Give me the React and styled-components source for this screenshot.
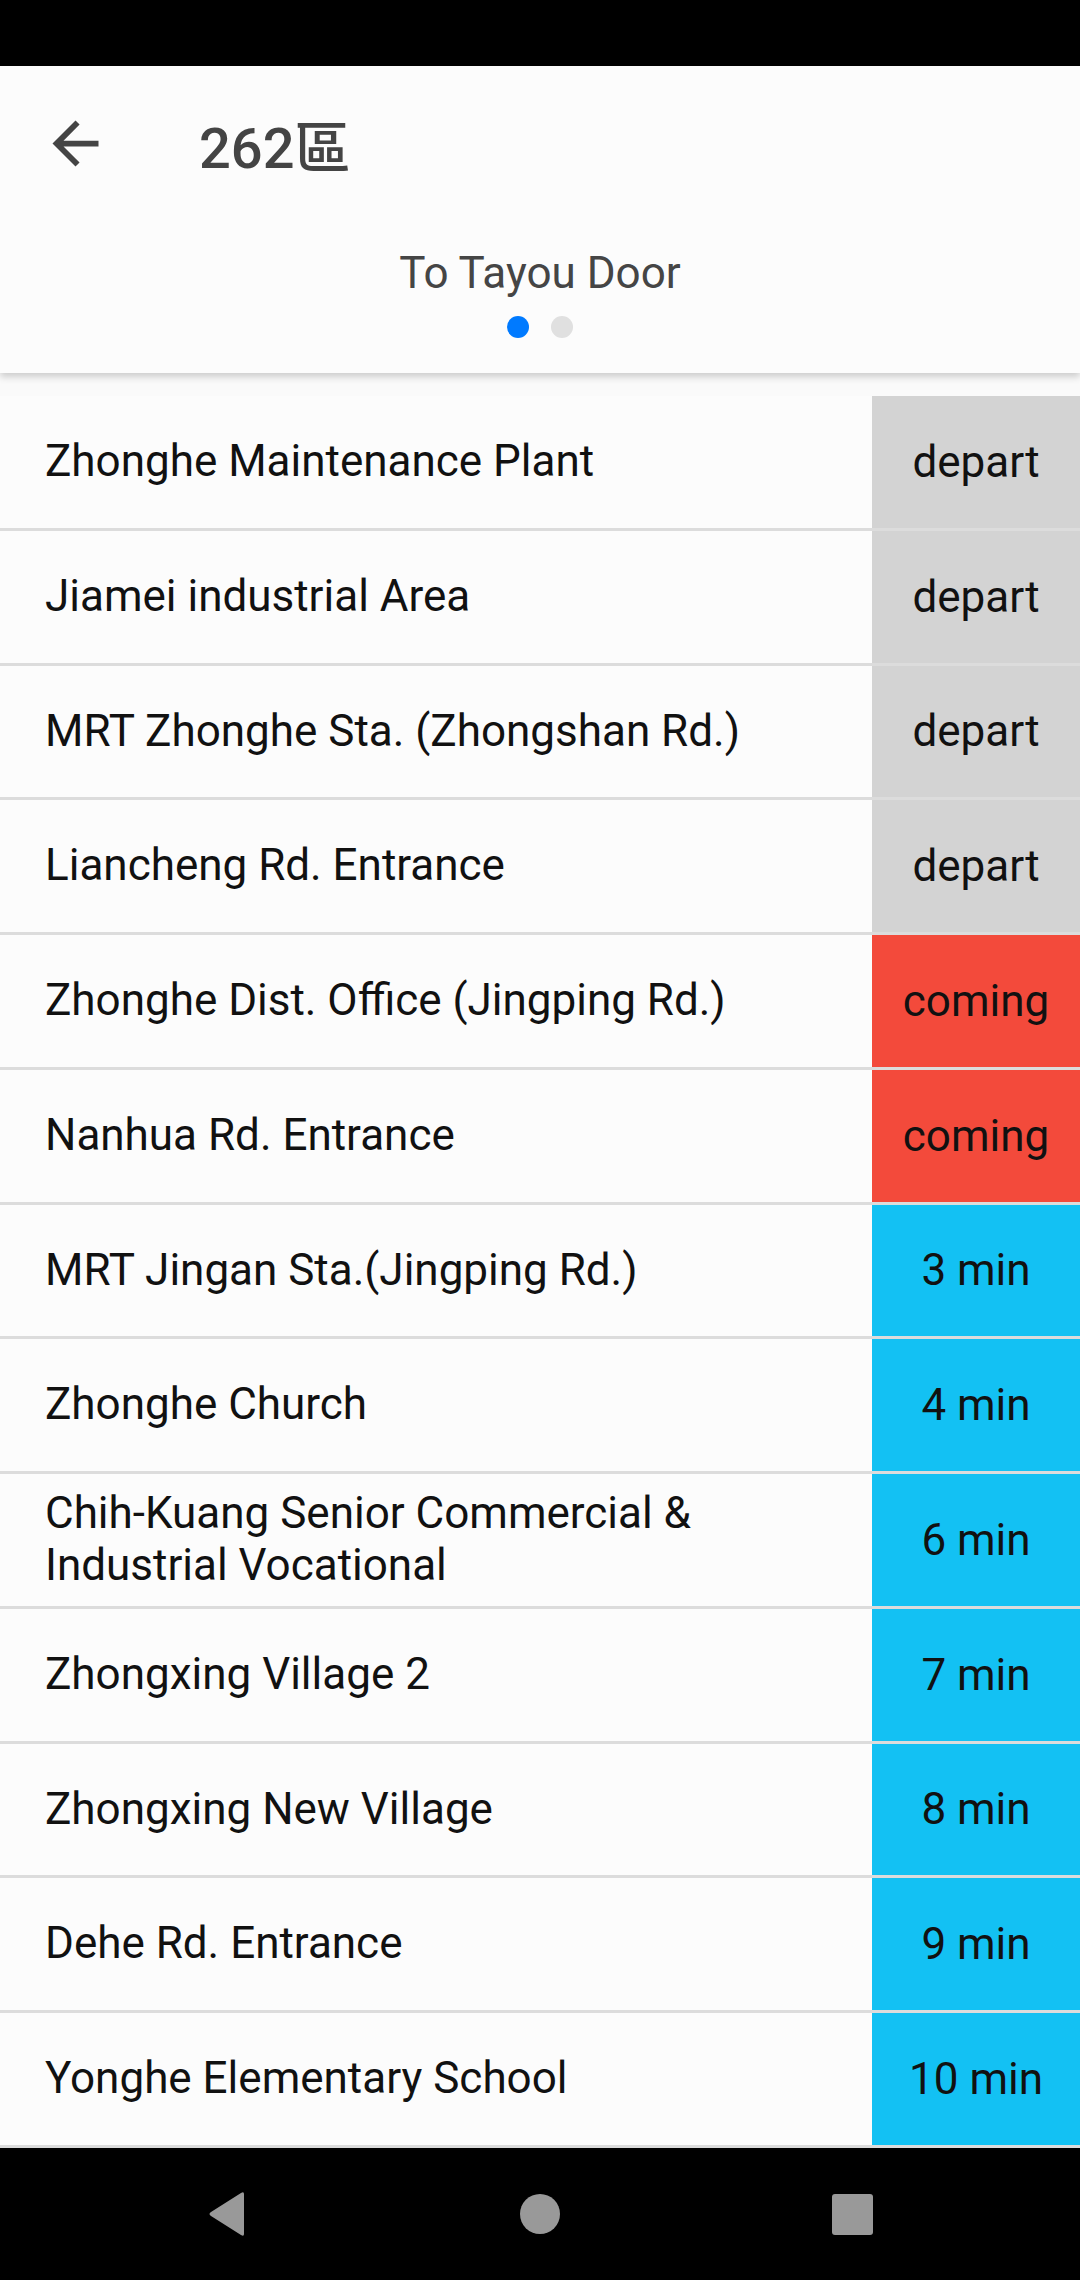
import React from "react";
import styled, { createGlobalStyle } from "styled-components";

const stops = [
  { name: "Zhonghe Maintenance Plant", status: "depart" },
  { name: "Jiamei industrial Area", status: "depart" },
  { name: "MRT Zhonghe Sta. (Zhongshan Rd.)", status: "depart" },
  { name: "Liancheng Rd. Entrance", status: "depart" },
  { name: "Zhonghe Dist. Office (Jingping Rd.)", status: "coming" },
  { name: "Nanhua Rd. Entrance", status: "coming" },
  { name: "MRT Jingan Sta.(Jingping Rd.)", status: "3 min" },
  { name: "Zhonghe Church", status: "4 min" },
  { name: "Chih-Kuang Senior Commercial & Industrial Vocational", status: "6 min" },
  { name: "Zhongxing Village 2", status: "7 min" },
  { name: "Zhongxing New Village", status: "8 min" },
  { name: "Dehe Rd. Entrance", status: "9 min" },
  { name: "Yonghe Elementary School", status: "10 min" },
];

const statusColor = (status) => {
  if (status === "depart") return "#d3d3d3";
  if (status === "coming") return "#f34a3b";
  return "#13c1f3";
};

export default function App() {
  return (
    <>
      <GlobalStyle />
      <Screen>
        <StatusBar />
        <Header>
          <AppBar>
            <BackButton>
              <svg width="69" height="69" viewBox="0 0 24 24">
                <path
                  fill="#444"
                  d="M20 11H7.83l5.59-5.59L12 4l-8 8 8 8 1.41-1.41L7.83 13H20v-2z"
                />
              </svg>
            </BackButton>
            <Title>262區</Title>
          </AppBar>
          <Pager>
            <PageTitle>To Tayou Door</PageTitle>
            <Dots>
              <Dot active />
              <Dot />
            </Dots>
          </Pager>
        </Header>
        <List>
          {stops.map((stop) => (
            <Row key={stop.name}>
              <StopName>{stop.name}</StopName>
              <Status color={statusColor(stop.status)}>{stop.status}</Status>
            </Row>
          ))}
        </List>
        <NavBar>
          <NavSlot>
            <svg width="40" height="46" viewBox="0 0 40 46">
              <path
                d="M36 3 L36 43 Q36 46 33 44 L3 25 Q0 23 3 21 L33 2 Q36 0 36 3 Z"
                fill="#999"
              />
            </svg>
          </NavSlot>
          <NavSlot>
            <HomeDot />
          </NavSlot>
          <NavSlot>
            <RecentSquare />
          </NavSlot>
        </NavBar>
      </Screen>
    </>
  );
}

const GlobalStyle = createGlobalStyle`
  body {
    margin: 0;
    background: #fafafa;
    font-family: Roboto, "Noto Sans CJK TC", sans-serif;
  }
`;

const Screen = styled.div`
  width: 1080px;
  height: 2280px;
  display: flex;
  flex-direction: column;
  background: #fafafa;
  overflow: hidden;
`;

const StatusBar = styled.div`
  height: 66px;
  background: #000;
  flex-shrink: 0;
`;

const Header = styled.div`
  position: relative;
  z-index: 1;
  height: 307px;
  flex-shrink: 0;
  background: #fcfcfc;
  box-shadow: 0 4px 7px rgba(0, 0, 0, 0.18);
`;

const AppBar = styled.div`
  height: 154px;
  display: flex;
  align-items: center;
`;

const BackButton = styled.div`
  width: 69px;
  height: 69px;
  margin-left: 41px;
  display: flex;
`;

const Title = styled.div`
  margin-left: 89px;
  font-family: Roboto, "Noto Sans CJK TC", sans-serif;
  font-size: 56px;
  font-weight: 500;
  color: #444;
`;

const Pager = styled.div`
  display: flex;
  flex-direction: column;
  align-items: center;
  padding-top: 27px;
`;

const PageTitle = styled.div`
  font-size: 44px;
  line-height: 52px;
  color: #454545;
`;

const Dots = styled.div`
  display: flex;
  gap: 22px;
  margin-top: 17px;
`;

const Dot = styled.div`
  width: 22px;
  height: 22px;
  border-radius: 50%;
  background: ${({ active }) => (active ? "#007aff" : "#e0e0e0")};
`;

const List = styled.div`
  margin-top: 23px;
  flex: 1;
  display: flex;
  flex-direction: column;
`;

const Row = styled.div`
  height: 134.75px;
  box-sizing: border-box;
  display: flex;
  border-bottom: 3px solid #dcdcdc;
  background: #fcfcfc;
`;

const StopName = styled.div`
  flex: 1;
  display: flex;
  align-items: center;
  padding: 0 20px 0 45px;
  font-size: 44px;
  line-height: 51.5px;
  color: #111;
`;

const Status = styled.div`
  width: 208px;
  flex-shrink: 0;
  display: flex;
  align-items: center;
  justify-content: center;
  font-size: 44px;
  color: #111;
  background: ${({ color }) => color};
`;

const NavBar = styled.div`
  height: 132px;
  flex-shrink: 0;
  background: #000;
  display: flex;
  justify-content: center;
  align-items: center;
`;

const NavSlot = styled.div`
  width: 312px;
  display: flex;
  justify-content: center;
  align-items: center;
`;

const HomeDot = styled.div`
  width: 40px;
  height: 40px;
  border-radius: 50%;
  background: #999;
`;

const RecentSquare = styled.div`
  width: 41px;
  height: 41px;
  border-radius: 3px;
  background: #999;
`;
